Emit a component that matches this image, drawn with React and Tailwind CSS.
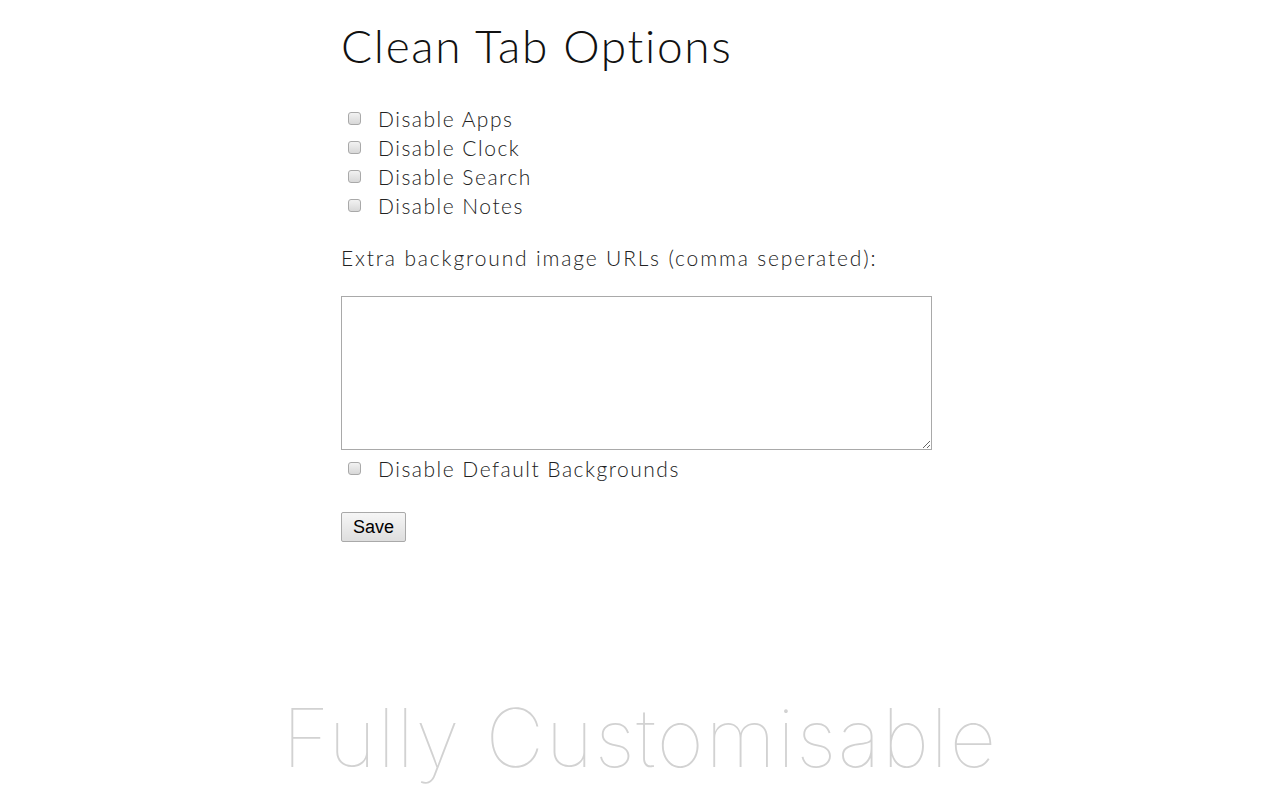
import { useState } from 'react';

const options = ['Disable Apps', 'Disable Clock', 'Disable Search', 'Disable Notes'];

const Box = ({ checked, onChange }) => (
  <input
    type="checkbox"
    checked={checked}
    onChange={onChange}
    className="appearance-none w-[13px] h-[13px] rounded-[3px] border border-[#a9a9a9] bg-gradient-to-b from-[#f2f2f2] to-[#d8d8d8] checked:bg-[#8ab] shrink-0 m-0"
  />
);

const Option = ({ label, checked, onToggle }) => (
  <label className="flex items-center h-[29px]">
    <span className="w-[37px] pl-[7px] flex items-center -translate-y-[2px]">
      <Box checked={checked} onChange={onToggle} />
    </span>
    <span className="text-[21px] text-[#222] tracking-[1.5px] -translate-y-[2px]">{label}</span>
  </label>
);

export default function App() {
  const [state, setState] = useState({});
  const toggle = (key) => setState((s) => ({ ...s, [key]: !s[key] }));

  return (
    <main
      className="w-[1280px] h-[800px] bg-white overflow-hidden font-light"
      style={{ fontFamily: 'Lato, "Open Sans", sans-serif' }}
    >
      <div className="w-[598px] mx-auto pt-[17px]">
        <h1 className="text-[46px] font-light text-[#111] leading-[58px] tracking-[1.7px]">
          Clean Tab Options
        </h1>
        <div className="mt-[31px] flex flex-col">
          {options.map((label) => (
            <Option
              key={label}
              label={label}
              checked={!!state[label]}
              onToggle={() => toggle(label)}
            />
          ))}
        </div>
        <p className="mt-[21px] text-[21px] text-[#222] leading-[29px] tracking-[1.85px]">
          Extra background image URLs (comma seperated):
        </p>
        <textarea className="mt-[24px] block w-[591px] h-[154px] border border-[#a9a9a9] resize-y outline-none" />
        <div className="mt-[6px]">
          <Option
            label="Disable Default Backgrounds"
            checked={!!state.defaults}
            onToggle={() => toggle('defaults')}
          />
        </div>
        <button
          className="mt-[27px] h-[30px] px-[11px] border border-[#a9a9a9] rounded-[2px] bg-gradient-to-b from-[#f6f6f6] to-[#dedede] text-[18px] text-black font-normal leading-none"
          style={{ fontFamily: '"Liberation Sans", Arial, sans-serif' }}
        >
          Save
        </button>
      </div>
      <div
        className="mt-[156px] text-center text-[81px] text-[#d2d2d2] font-thin leading-none tracking-[1.6px]"
        style={{ fontFamily: 'Inter, Lato, sans-serif', fontWeight: 100 }}
      >
        Fully Customisable
      </div>
    </main>
  );
}
